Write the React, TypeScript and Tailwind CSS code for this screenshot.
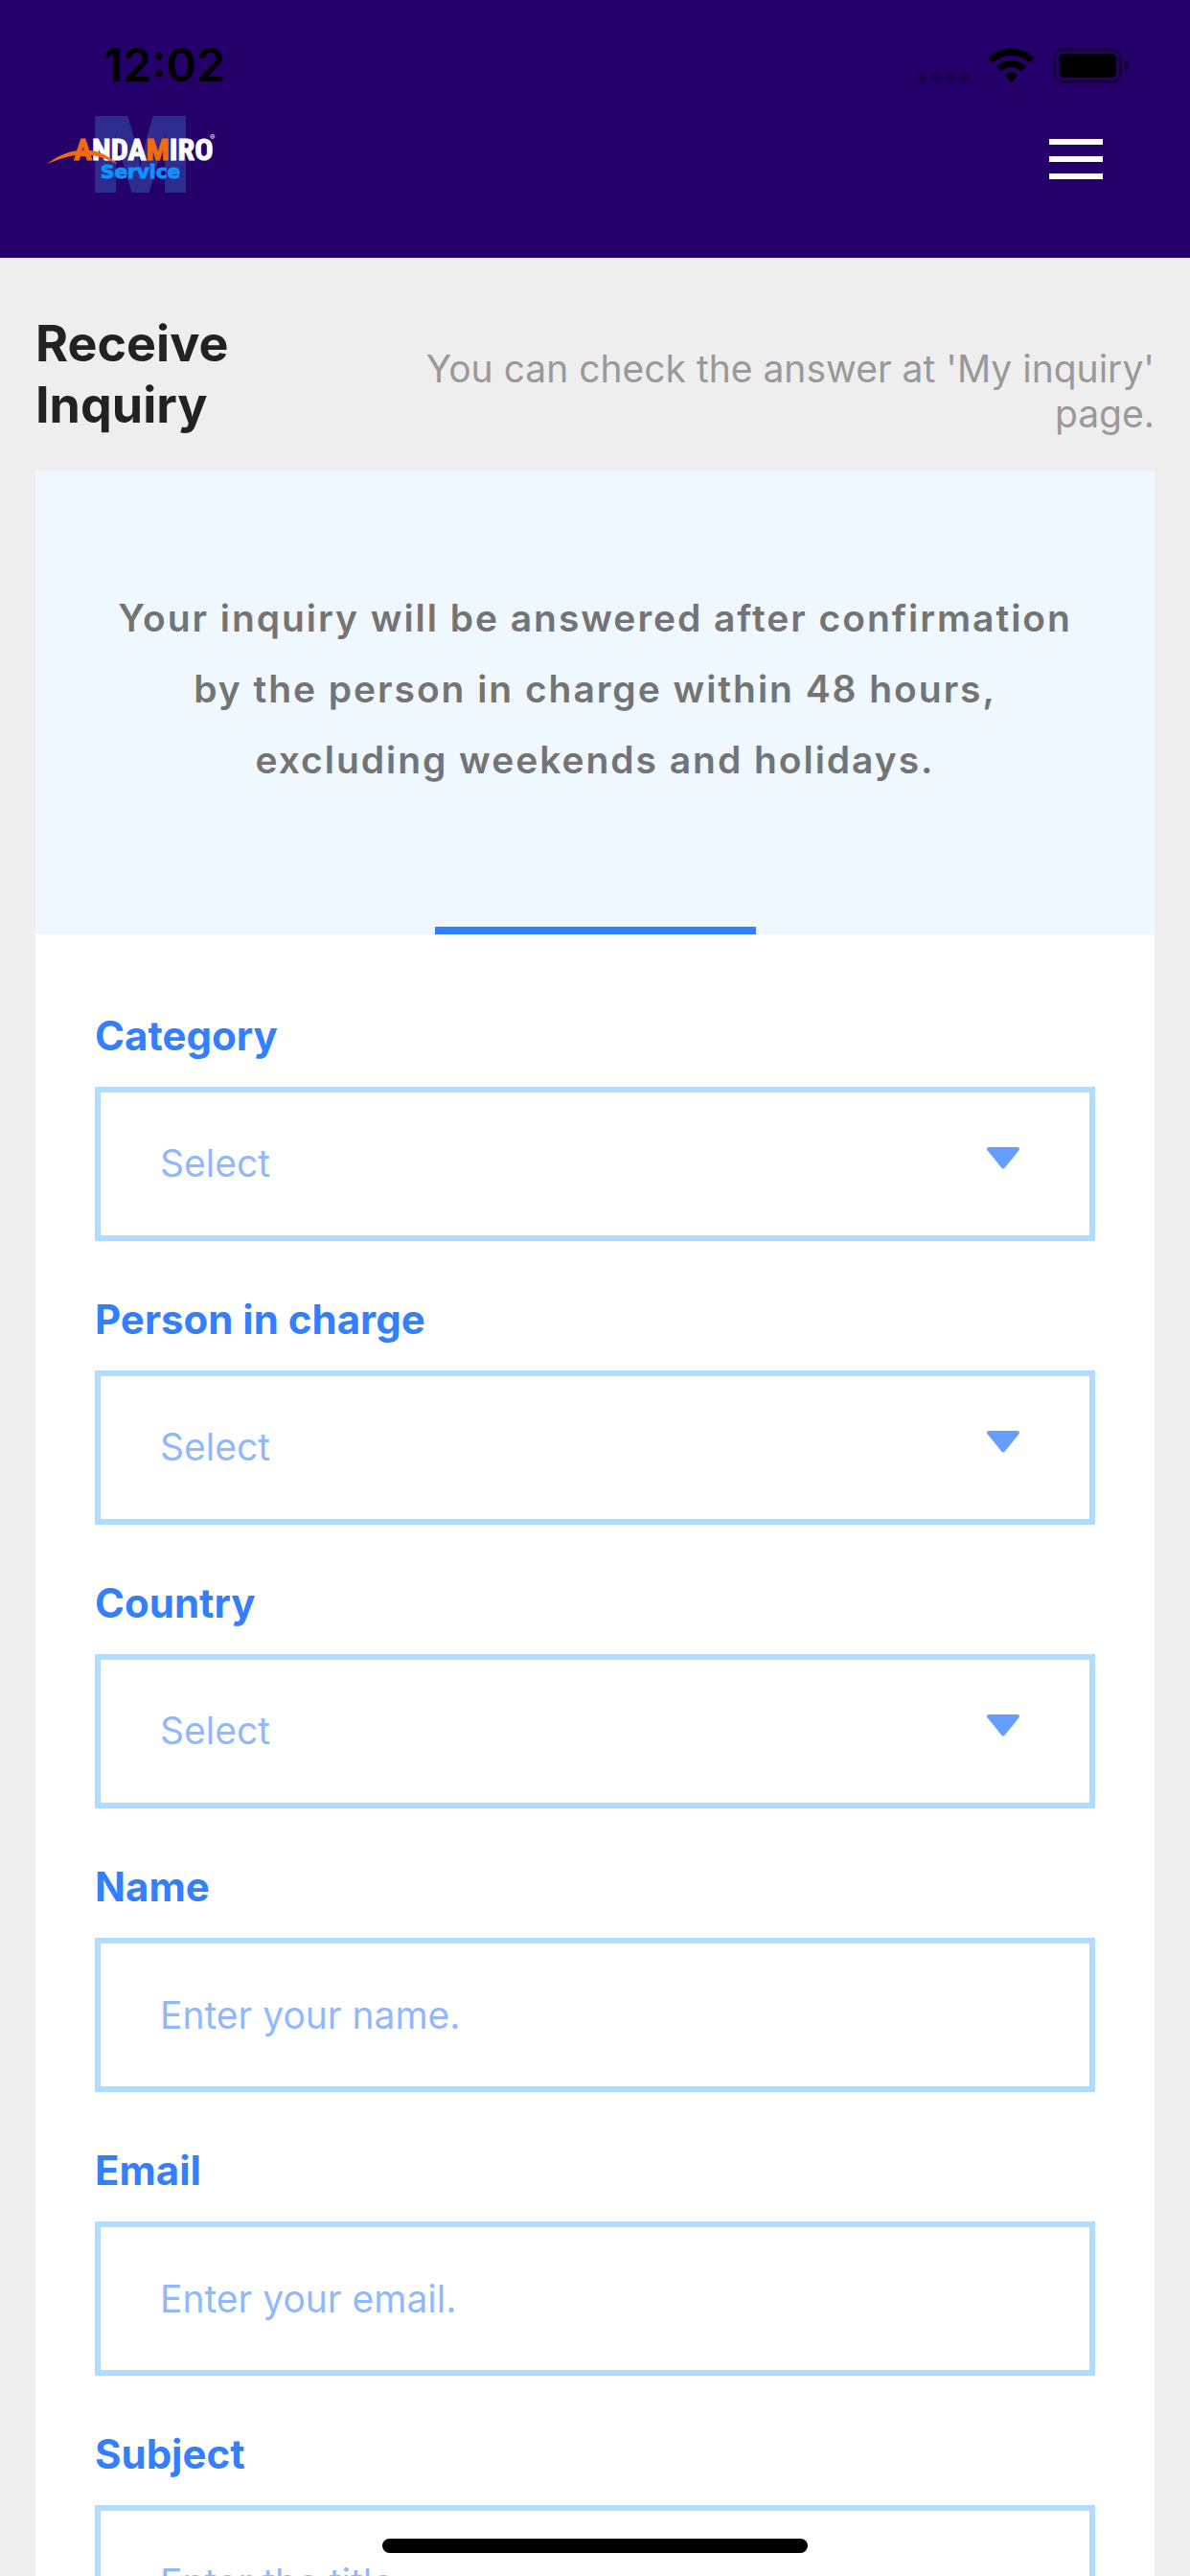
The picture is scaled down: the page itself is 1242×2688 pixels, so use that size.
import React, { useState } from "react";

type Field = {
  id: string;
  label: string;
  kind: "select" | "text" | "email";
  placeholder: string;
};

const fields: Field[] = [
  { id: "category", label: "Category", kind: "select", placeholder: "Select" },
  { id: "person", label: "Person in charge", kind: "select", placeholder: "Select" },
  { id: "country", label: "Country", kind: "select", placeholder: "Select" },
  { id: "name", label: "Name", kind: "text", placeholder: "Enter your name." },
  { id: "email", label: "Email", kind: "email", placeholder: "Enter your email." },
  { id: "subject", label: "Subject", kind: "text", placeholder: "Enter the title." },
];

const Logo: React.FC = () => (
  <svg width="180" height="84" viewBox="48 119 180 84" className="overflow-visible" role="img" aria-label="Andamiro Service">
    <text x="94" y="201" fontFamily="Inter, sans-serif" fontWeight="900" fontSize="110" fill="#2f2c8f">M</text>
    <text x="77" y="167" fontFamily="'Liberation Sans Narrow', 'Roboto Condensed', 'Open Sans Condensed', sans-serif" fontWeight="700" fontSize="32" fill="#fff" strokeWidth="1">
      <tspan fill="#f26a10" stroke="#f26a10">A</tspan>
      <tspan stroke="#fff">NDA</tspan>
      <tspan fill="#f26a10" stroke="#f26a10">M</tspan>
      <tspan stroke="#fff">IRO</tspan>
    </text>
    <text x="219" y="146" fontFamily="Inter, sans-serif" fontSize="8" fill="#fff">®</text>
    <path d="M49 171C62 161 76 156 90 156.500C104 157 114 163 123 171.500C112 166 101 161.500 88 161.500C73 161.500 62 166 49 171Z" fill="#f26a10" />
    <text x="105" y="186" fontFamily="'DejaVu Sans', sans-serif" fontWeight="700" fontSize="20" fill="#0a94ff" stroke="#0a94ff" strokeWidth="1">Service</text>
  </svg>
);

const StatusBar: React.FC = () => (
  <div className="flex items-center justify-between pt-10 pr-[63px] pl-[108px]">
    <time className="text-[48px] leading-[56px] font-semibold text-black">12:02</time>
    <svg width="222" height="40" viewBox="957 47 222 40" aria-hidden="true">
      <g fill="#000" opacity="0.25">
        <rect x="957" y="75" width="10" height="10" rx="4" />
        <rect x="972" y="75" width="10" height="10" rx="4" />
        <rect x="987" y="75" width="10" height="10" rx="4" />
        <rect x="1002" y="75" width="10" height="10" rx="4" />
      </g>
      {/* wifi */}
      <path d="M1031.500 59.500Q1041.500 49.500 1055.500 49.500Q1069.500 49.500 1079.500 59.500L1074.500 64.500Q1066.500 57 1055.500 57Q1044.500 57 1036.500 64.500Z" />
      <path d="M1040 68.500Q1046.500 62 1055.500 62Q1064.500 62 1071 68.500L1066 73.500Q1061.500 69.300 1055.500 69.300Q1049.500 69.300 1045 73.500Z" />
      <path d="M1048.800 77.500Q1051.500 74.500 1055.500 74.500Q1059.500 74.500 1062.200 77.500L1055.500 85Z" />
      {/* battery */}
      <rect x="1100.500" y="50.500" width="69" height="34" rx="9" fill="none" stroke="#000" strokeOpacity="0.4" strokeWidth="3" />
      <rect x="1105" y="55" width="60" height="25" rx="5" />
      <path d="M1174 61Q1178 63 1178 67.500Q1178 72 1174 74Z" opacity="0.45" />
    </svg>
  </div>
);

const Header: React.FC = () => (
  <header className="shrink-0 bg-[#25006a] pb-[66px]">
    <StatusBar />
    <div className="flex items-center justify-between pt-[23px] pr-[91px] pl-12">
      <a href="#home">
        <Logo />
      </a>
      <button type="button" aria-label="Open menu" className="flex w-14 flex-col gap-3 pt-2.5">
        <span className="h-[6px] w-full bg-white" />
        <span className="h-[6px] w-full bg-white" />
        <span className="h-[6px] w-full bg-white" />
      </button>
    </div>
  </header>
);

const fieldClass =
  "block h-[161px] w-full appearance-none rounded-none border-[6px] border-[#b0dcff] bg-white px-[62px] text-[39px] text-[#8fb8ff] outline-none placeholder:text-[#8fb8ff] placeholder:opacity-100";

const FormField: React.FC<{ field: Field }> = ({ field }) => {
  const [value, setValue] = useState("");

  return (
    <div className="flex flex-col gap-7">
      <label htmlFor={field.id} className="text-[42px] leading-[50px] font-bold text-[#337fff]">
        {field.label}
      </label>
      {field.kind === "select" ? (
        <div className="relative">
          <select id={field.id} value={value} onChange={(e) => setValue(e.target.value)} className={fieldClass}>
            <option value="">{field.placeholder}</option>
          </select>
          <svg
            className="pointer-events-none absolute top-[62px] right-[78px]"
            width="36"
            height="25"
            viewBox="0 0 36 25"
            aria-hidden="true"
          >
            <path d="M3 3H33L18 21.500Z" fill="#669eff" stroke="#669eff" strokeWidth="4" strokeLinejoin="round" />
          </svg>
        </div>
      ) : (
        <input
          id={field.id}
          type={field.kind}
          value={value}
          onChange={(e) => setValue(e.target.value)}
          placeholder={field.placeholder}
          className={fieldClass}
        />
      )}
    </div>
  );
};

const App: React.FC = () => {
  return (
    <div className="flex h-screen flex-col overflow-hidden bg-[#eee] font-['Inter',sans-serif]">
      <Header />

      <main className="min-h-0 flex-1 overflow-y-auto px-[37px] pt-[58px] [scrollbar-width:none]">
        <div className="flex items-end justify-between pb-9">
          <h1 className="w-1/4 text-[52px] leading-[64px] font-bold text-[#222]">Receive Inquiry</h1>
          <p className="w-2/3 text-right text-[39px] leading-[47px] text-[#999]">
            You can check the answer at 'My inquiry' page.
          </p>
        </div>

        <section className="bg-white">
          <div className="flex flex-col items-center bg-[#f0f8ff] pt-[117px]">
            <p className="px-[76px] pb-[137px] text-center text-[39px] leading-[74px] font-semibold tracking-wider text-[#747474]">
              Your inquiry will be answered after confirmation by the person in charge within 48 hours, excluding
              weekends and holidays.
            </p>
            <div className="h-2 w-[335px] bg-[#337fff]" />
          </div>

          <form className="flex flex-col gap-[57px] px-[62px] pt-[81px] pb-20">
            {fields.map((field) => (
              <FormField key={field.id} field={field} />
            ))}
          </form>
        </section>
      </main>

      {/* Home indicator */}
      <div className="fixed bottom-6 left-1/2 h-[15px] w-[444px] -translate-x-1/2 rounded-full bg-black" />
    </div>
  );
};

export default App;
